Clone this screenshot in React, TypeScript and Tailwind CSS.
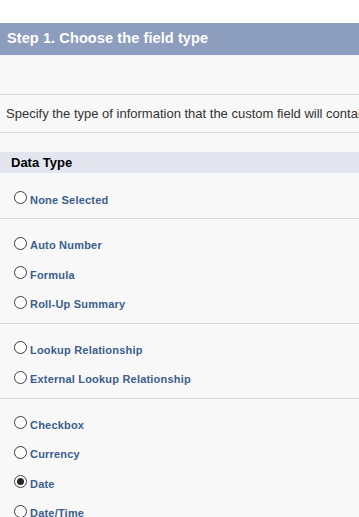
import React from "react";

const Radio = ({ checked }: { checked?: boolean }) => (
  <span className="w-[13px] h-[13px] rounded-full border border-[#3d3d3d] bg-white flex items-center justify-center -translate-y-[2px] shrink-0">
    {checked && <span className="w-[7px] h-[7px] rounded-full bg-[#262626]" />}
  </span>
);

const Row = ({ label, checked }: { label: string; checked?: boolean }) => (
  <div className="h-[29.5px] flex items-center pl-[14px] gap-[3px]">
    <Radio checked={checked} />
    <span className="text-[11px] font-bold tracking-[0.2px] text-[#3b5e8e]">{label}</span>
  </div>
);

export default function App() {
  return (
    <div className="w-[359px] h-[517px] overflow-hidden bg-white" style={{ fontFamily: '"Liberation Sans", Arial, sans-serif' }}>
      <div className="h-[23px] bg-white" />
      <div className="h-[33px] bg-[#8d9dbe] flex items-center pl-[7px] border-b border-[#eef0f4]">
        <span className="text-[14.5px] font-bold text-white whitespace-nowrap tracking-[0.1px]">Step 1. Choose the field type</span>
      </div>
      <div className="bg-[#f8f8f8]">
        <div className="h-[39px] border-b border-[#dcdcdc]" />
        <div className="h-[38px] flex items-center pl-[6px] border-b border-[#dcdcdc] whitespace-nowrap overflow-hidden">
          <span className="text-[13px] text-[#333333]">Specify the type of information that the custom field will contain.</span>
        </div>
        <div className="h-[19px]" />
        <div className="h-[21px] bg-[#e3e6ee] flex items-center pl-[11px]">
          <span className="text-[13px] font-bold text-black">Data Type</span>
        </div>
        <div className="pt-[12px] pb-[3px] border-b border-[#d8d8d8]">
          <Row label="None Selected" />
        </div>
        <div className="pt-[12px] pb-[4px] border-b border-[#d8d8d8]">
          <Row label="Auto Number" />
          <Row label="Formula" />
          <Row label="Roll-Up Summary" />
        </div>
        <div className="pt-[11px] pb-[4px] border-b border-[#d8d8d8]">
          <Row label="Lookup Relationship" />
          <Row label="External Lookup Relationship" />
        </div>
        <div className="pt-[11px]">
          <Row label="Checkbox" />
          <Row label="Currency" />
          <Row label="Date" checked />
          <Row label="Date/Time" />
        </div>
      </div>
    </div>
  );
}
